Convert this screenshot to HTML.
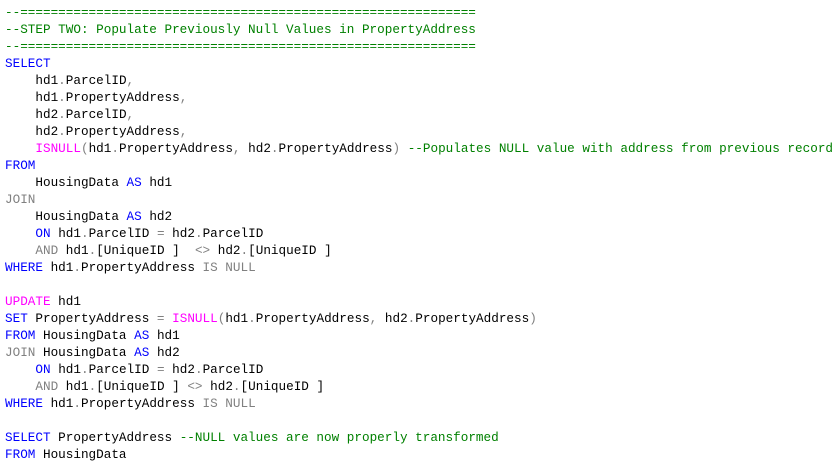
<!DOCTYPE html>
<html><head><meta charset="utf-8"><style>
html,body{margin:0;padding:0;background:#fff;width:837px;height:469px;overflow:hidden}
pre{margin:0;padding:4px 0 0 5px;font-family:"Liberation Mono","DejaVu Sans Mono",monospace;font-size:12.67px;line-height:17px;color:#000;white-space:pre}
.c{color:#008000}.k{color:#0000ff}.f{color:#ff00ff}.g{color:#808080}
</style></head><body><pre><span class="c">--============================================================</span>
<span class="c">--STEP TWO: Populate Previously Null Values in PropertyAddress</span>
<span class="c">--============================================================</span>
<span class="k">SELECT</span>
    hd1<span class="g">.</span>ParcelID<span class="g">,</span>
    hd1<span class="g">.</span>PropertyAddress<span class="g">,</span>
    hd2<span class="g">.</span>ParcelID<span class="g">,</span>
    hd2<span class="g">.</span>PropertyAddress<span class="g">,</span>
    <span class="f">ISNULL</span><span class="g">(</span>hd1<span class="g">.</span>PropertyAddress<span class="g">,</span> hd2<span class="g">.</span>PropertyAddress<span class="g">)</span> <span class="c">--Populates NULL value with address from previous record</span>
<span class="k">FROM</span>
    HousingData <span class="k">AS</span> hd1
<span class="g">JOIN</span>
    HousingData <span class="k">AS</span> hd2
    <span class="k">ON</span> hd1<span class="g">.</span>ParcelID <span class="g">=</span> hd2<span class="g">.</span>ParcelID
    <span class="g">AND</span> hd1<span class="g">.</span>[UniqueID ]  <span class="g">&lt;&gt;</span> hd2<span class="g">.</span>[UniqueID ]
<span class="k">WHERE</span> hd1<span class="g">.</span>PropertyAddress <span class="g">IS NULL</span>

<span class="f">UPDATE</span> hd1
<span class="k">SET</span> PropertyAddress <span class="g">=</span> <span class="f">ISNULL</span><span class="g">(</span>hd1<span class="g">.</span>PropertyAddress<span class="g">,</span> hd2<span class="g">.</span>PropertyAddress<span class="g">)</span>
<span class="k">FROM</span> HousingData <span class="k">AS</span> hd1
<span class="g">JOIN</span> HousingData <span class="k">AS</span> hd2
    <span class="k">ON</span> hd1<span class="g">.</span>ParcelID <span class="g">=</span> hd2<span class="g">.</span>ParcelID
    <span class="g">AND</span> hd1<span class="g">.</span>[UniqueID ] <span class="g">&lt;&gt;</span> hd2<span class="g">.</span>[UniqueID ]
<span class="k">WHERE</span> hd1<span class="g">.</span>PropertyAddress <span class="g">IS NULL</span>

<span class="k">SELECT</span> PropertyAddress <span class="c">--NULL values are now properly transformed</span>
<span class="k">FROM</span> HousingData
</pre></body></html>
